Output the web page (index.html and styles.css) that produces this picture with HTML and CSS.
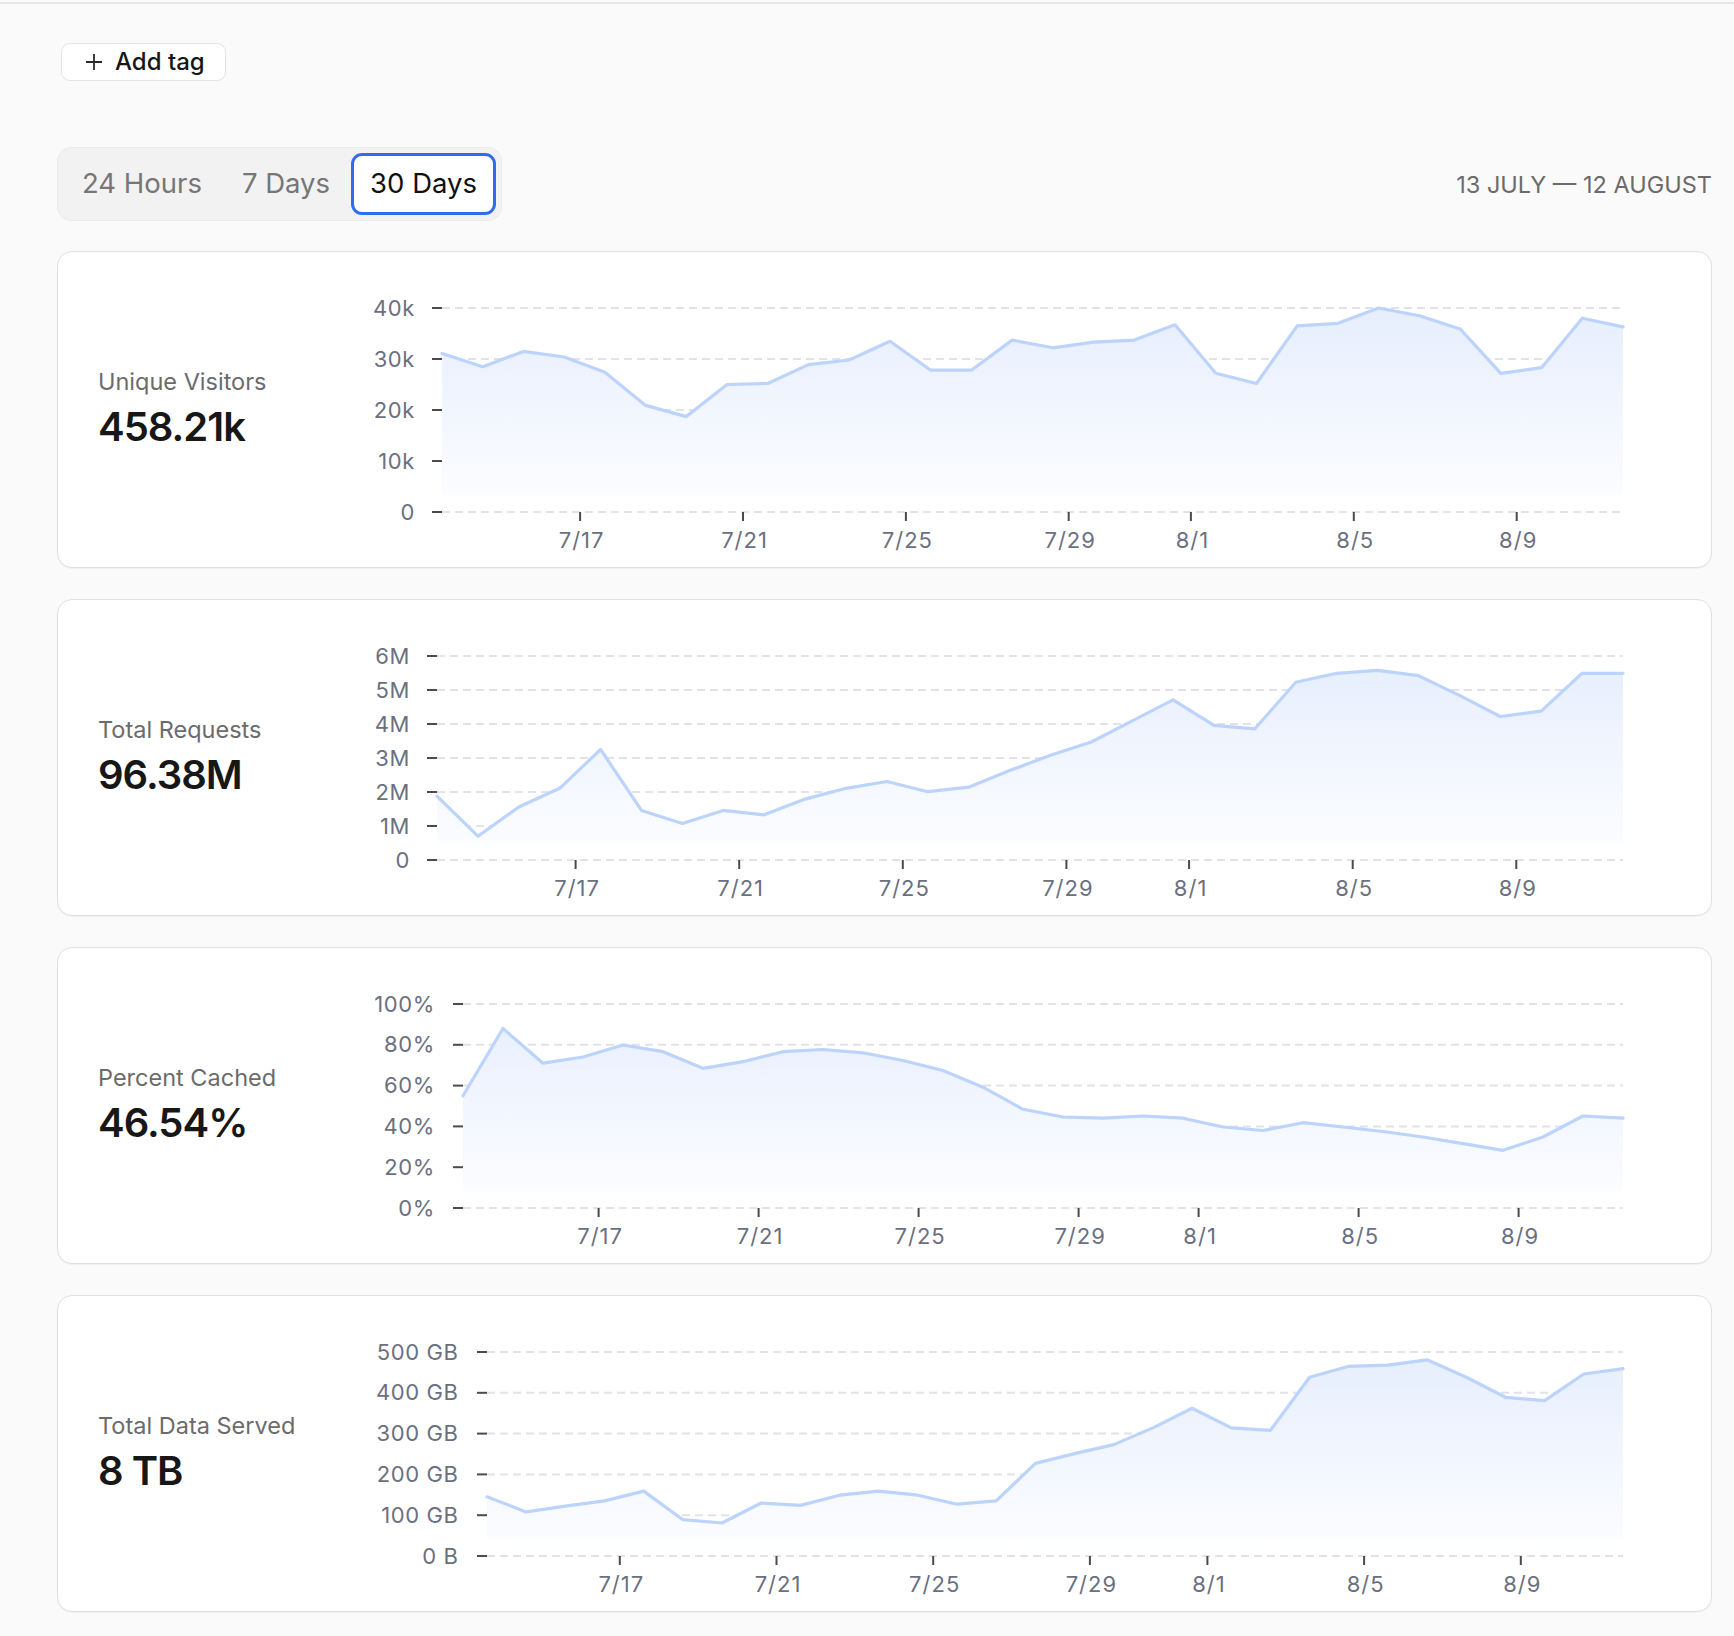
FILE: index.html
```html
<!DOCTYPE html>
<html lang="en">
<head>
<meta charset="utf-8">
<title>Analytics</title>
<link rel="stylesheet" href="styles.css">
</head>
<body>
<div class="topline"></div>
<main class="page">
  <div class="tags">
    <button class="add-tag">
      <svg class="plus" viewBox="0 0 18 18" width="18" height="18"><path d="M9 1v16M1 9h16"/></svg>
      <span>Add tag</span>
    </button>
  </div>

  <div class="toolbar">
    <div class="segmented">
      <button class="seg">24 Hours</button>
      <button class="seg">7 Days</button>
      <button class="seg active">30 Days</button>
    </div>
    <div class="range">13 JULY — 12 AUGUST</div>
  </div>

  <section class="card">
    <div class="stat">
      <div class="stat-label">Unique Visitors</div>
      <div class="stat-value">458.21k</div>
    </div>
    <svg class="chart" width="1300" height="314" viewBox="0 0 1300 314">
      <defs><linearGradient id="g1" gradientUnits="userSpaceOnUse" x1="0" y1="56" x2="0" y2="260"><stop offset="0" stop-color="#e6eefd"/><stop offset="0.9" stop-color="#fbfcff"/><stop offset="0.95" stop-color="#ffffff" stop-opacity="0"/></linearGradient></defs>
      <g class="grid">
        <line x1="87" y1="56" x2="1268" y2="56"/><line x1="87" y1="107" x2="1268" y2="107"/><line x1="87" y1="158" x2="1268" y2="158"/><line x1="87" y1="209" x2="1268" y2="209"/><line x1="87" y1="260" x2="1268" y2="260"/>
      </g>
      <polygon class="area" fill="url(#g1)" points="87,260 87,101.4 127.7,114.7 168.4,99.4 209.2,105 249.9,120.3 290.6,153.4 331.3,164.6 372.1,132.5 412.8,131.5 453.5,112.6 494.2,108 535,89.2 575.7,118.2 616.4,118.2 657.1,88.1 697.9,95.8 738.6,90.2 779.3,88.1 820,72.8 860.8,121.3 901.5,131.5 942.2,73.9 982.9,71.3 1023.7,56 1064.4,63.7 1105.1,76.9 1145.8,121.3 1186.6,115.7 1227.3,66.2 1268,74.9 1268,260"/>
      <polyline class="line" points="87,101.4 127.7,114.7 168.4,99.4 209.2,105 249.9,120.3 290.6,153.4 331.3,164.6 372.1,132.5 412.8,131.5 453.5,112.6 494.2,108 535,89.2 575.7,118.2 616.4,118.2 657.1,88.1 697.9,95.8 738.6,90.2 779.3,88.1 820,72.8 860.8,121.3 901.5,131.5 942.2,73.9 982.9,71.3 1023.7,56 1064.4,63.7 1105.1,76.9 1145.8,121.3 1186.6,115.7 1227.3,66.2 1268,74.9"/>
      <g class="tick">
        <line x1="77" y1="56" x2="87" y2="56"/><line x1="77" y1="107" x2="87" y2="107"/><line x1="77" y1="158" x2="87" y2="158"/><line x1="77" y1="209" x2="87" y2="209"/><line x1="77" y1="260" x2="87" y2="260"/>
        <line x1="225.1" y1="260" x2="225.1" y2="269"/><line x1="388" y1="260" x2="388" y2="269"/><line x1="550.9" y1="260" x2="550.9" y2="269"/><line x1="713.7" y1="260" x2="713.7" y2="269"/><line x1="835.9" y1="260" x2="835.9" y2="269"/><line x1="998.8" y1="260" x2="998.8" y2="269"/><line x1="1161.7" y1="260" x2="1161.7" y2="269"/>
      </g>
      <g class="ylab">
        <text x="60" y="63.5">40k</text><text x="60" y="114.5">30k</text><text x="60" y="165.5">20k</text><text x="60" y="216.5">10k</text><text x="60" y="267.5">0</text>
      </g>
      <g class="xlab">
        <text x="226.6" y="296">7/17</text><text x="389.5" y="296">7/21</text><text x="552.4" y="296">7/25</text><text x="715.2" y="296">7/29</text><text x="837.4" y="296">8/1</text><text x="1000.3" y="296">8/5</text><text x="1163.2" y="296">8/9</text>
      </g>
    </svg>
  </section>

  <section class="card">
    <div class="stat">
      <div class="stat-label">Total Requests</div>
      <div class="stat-value">96.38M</div>
    </div>
    <svg class="chart" width="1300" height="314" viewBox="0 0 1300 314">
      <defs><linearGradient id="g2" gradientUnits="userSpaceOnUse" x1="0" y1="56" x2="0" y2="260"><stop offset="0" stop-color="#e6eefd"/><stop offset="0.9" stop-color="#fbfcff"/><stop offset="0.95" stop-color="#ffffff" stop-opacity="0"/></linearGradient></defs>
      <g class="grid">
        <line x1="82" y1="56" x2="1268" y2="56"/><line x1="82" y1="90" x2="1268" y2="90"/><line x1="82" y1="124" x2="1268" y2="124"/><line x1="82" y1="158" x2="1268" y2="158"/><line x1="82" y1="192" x2="1268" y2="192"/><line x1="82" y1="226" x2="1268" y2="226"/><line x1="82" y1="260" x2="1268" y2="260"/>
      </g>
      <polygon class="area" fill="url(#g2)" points="82,260 82,196.1 122.9,236.2 163.8,207 204.7,188.3 245.6,149.5 286.5,210.4 327.4,223.6 368.3,210.4 409.2,214.8 450.1,199.1 491,188.3 531.9,181.5 572.8,191.7 613.7,187.2 654.6,170.6 695.5,155.3 736.3,142 777.2,120.9 818.1,99.9 859,125.4 899.9,128.8 940.8,82.2 981.7,73.3 1022.6,70.3 1063.5,75.7 1104.4,95.4 1145.3,116.5 1186.2,111.1 1227.1,73.3 1268,73.3 1268,260"/>
      <polyline class="line" points="82,196.1 122.9,236.2 163.8,207 204.7,188.3 245.6,149.5 286.5,210.4 327.4,223.6 368.3,210.4 409.2,214.8 450.1,199.1 491,188.3 531.9,181.5 572.8,191.7 613.7,187.2 654.6,170.6 695.5,155.3 736.3,142 777.2,120.9 818.1,99.9 859,125.4 899.9,128.8 940.8,82.2 981.7,73.3 1022.6,70.3 1063.5,75.7 1104.4,95.4 1145.3,116.5 1186.2,111.1 1227.1,73.3 1268,73.3"/>
      <g class="tick">
        <line x1="72" y1="56" x2="82" y2="56"/><line x1="72" y1="90" x2="82" y2="90"/><line x1="72" y1="124" x2="82" y2="124"/><line x1="72" y1="158" x2="82" y2="158"/><line x1="72" y1="192" x2="82" y2="192"/><line x1="72" y1="226" x2="82" y2="226"/><line x1="72" y1="260" x2="82" y2="260"/>
        <line x1="220.6" y1="260" x2="220.6" y2="269"/><line x1="384.2" y1="260" x2="384.2" y2="269"/><line x1="547.8" y1="260" x2="547.8" y2="269"/><line x1="711.4" y1="260" x2="711.4" y2="269"/><line x1="834.1" y1="260" x2="834.1" y2="269"/><line x1="997.7" y1="260" x2="997.7" y2="269"/><line x1="1161.3" y1="260" x2="1161.3" y2="269"/>
      </g>
      <g class="ylab">
        <text x="55" y="63.5">6M</text><text x="55" y="97.5">5M</text><text x="55" y="131.5">4M</text><text x="55" y="165.5">3M</text><text x="55" y="199.5">2M</text><text x="55" y="233.5">1M</text><text x="55" y="267.5">0</text>
      </g>
      <g class="xlab">
        <text x="222.1" y="296">7/17</text><text x="385.7" y="296">7/21</text><text x="549.3" y="296">7/25</text><text x="712.9" y="296">7/29</text><text x="835.6" y="296">8/1</text><text x="999.2" y="296">8/5</text><text x="1162.8" y="296">8/9</text>
      </g>
    </svg>
  </section>

  <section class="card">
    <div class="stat">
      <div class="stat-label">Percent Cached</div>
      <div class="stat-value">46.54%</div>
    </div>
    <svg class="chart" width="1300" height="314" viewBox="0 0 1300 314">
      <defs><linearGradient id="g3" gradientUnits="userSpaceOnUse" x1="0" y1="56" x2="0" y2="260"><stop offset="0" stop-color="#e6eefd"/><stop offset="0.9" stop-color="#fbfcff"/><stop offset="0.95" stop-color="#ffffff" stop-opacity="0"/></linearGradient></defs>
      <g class="grid">
        <line x1="108" y1="56" x2="1268" y2="56"/><line x1="108" y1="96.8" x2="1268" y2="96.8"/><line x1="108" y1="137.6" x2="1268" y2="137.6"/><line x1="108" y1="178.4" x2="1268" y2="178.4"/><line x1="108" y1="219.2" x2="1268" y2="219.2"/><line x1="108" y1="260" x2="1268" y2="260"/>
      </g>
      <polygon class="area" fill="url(#g3)" points="108,260 108,147.8 148,80.5 188,115.2 228,109 268,97 308,103.7 348,120.3 388,113.7 428,103.7 468,101.5 508,104.8 548,112.5 588,122.5 628,139.2 668,161.3 708,169 748,170.2 788,168 828,170.2 868,179 908,182.5 948,174.7 988,179 1028,183.5 1068,189 1108,195.7 1148,202.3 1188,189 1228,168 1268,170.2 1268,260"/>
      <polyline class="line" points="108,147.8 148,80.5 188,115.2 228,109 268,97 308,103.7 348,120.3 388,113.7 428,103.7 468,101.5 508,104.8 548,112.5 588,122.5 628,139.2 668,161.3 708,169 748,170.2 788,168 828,170.2 868,179 908,182.5 948,174.7 988,179 1028,183.5 1068,189 1108,195.7 1148,202.3 1188,189 1228,168 1268,170.2"/>
      <g class="tick">
        <line x1="98" y1="56" x2="108" y2="56"/><line x1="98" y1="96.8" x2="108" y2="96.8"/><line x1="98" y1="137.6" x2="108" y2="137.6"/><line x1="98" y1="178.4" x2="108" y2="178.4"/><line x1="98" y1="219.2" x2="108" y2="219.2"/><line x1="98" y1="260" x2="108" y2="260"/>
        <line x1="243.6" y1="260" x2="243.6" y2="269"/><line x1="403.6" y1="260" x2="403.6" y2="269"/><line x1="563.6" y1="260" x2="563.6" y2="269"/><line x1="723.6" y1="260" x2="723.6" y2="269"/><line x1="843.6" y1="260" x2="843.6" y2="269"/><line x1="1003.6" y1="260" x2="1003.6" y2="269"/><line x1="1163.6" y1="260" x2="1163.6" y2="269"/>
      </g>
      <g class="ylab">
        <text x="80" y="63.5">100%</text><text x="80" y="104.3">80%</text><text x="80" y="145.1">60%</text><text x="80" y="185.9">40%</text><text x="80" y="226.7">20%</text><text x="80" y="267.5">0%</text>
      </g>
      <g class="xlab">
        <text x="245.1" y="296">7/17</text><text x="405.1" y="296">7/21</text><text x="565.1" y="296">7/25</text><text x="725.1" y="296">7/29</text><text x="845.1" y="296">8/1</text><text x="1005.1" y="296">8/5</text><text x="1165.1" y="296">8/9</text>
      </g>
    </svg>
  </section>

  <section class="card">
    <div class="stat">
      <div class="stat-label">Total Data Served</div>
      <div class="stat-value">8 TB</div>
    </div>
    <svg class="chart" width="1300" height="314" viewBox="0 0 1300 314">
      <defs><linearGradient id="g4" gradientUnits="userSpaceOnUse" x1="0" y1="56" x2="0" y2="260"><stop offset="0" stop-color="#e6eefd"/><stop offset="0.9" stop-color="#fbfcff"/><stop offset="0.95" stop-color="#ffffff" stop-opacity="0"/></linearGradient></defs>
      <g class="grid">
        <line x1="132" y1="56" x2="1268" y2="56"/><line x1="132" y1="96.8" x2="1268" y2="96.8"/><line x1="132" y1="137.6" x2="1268" y2="137.6"/><line x1="132" y1="178.4" x2="1268" y2="178.4"/><line x1="132" y1="219.2" x2="1268" y2="219.2"/><line x1="132" y1="260" x2="1268" y2="260"/>
      </g>
      <polygon class="area" fill="url(#g4)" points="132,260 132,200.8 171.2,215.9 210.3,210.2 249.5,204.9 288.7,195.1 327.9,223.7 367,227 406.2,207 445.4,209.4 484.6,199.2 523.7,195.1 562.9,199.2 602.1,208.2 641.2,204.9 680.4,167.4 719.6,157.6 758.8,148.6 797.9,131.9 837.1,112.3 876.3,131.9 915.5,134.3 954.6,81.3 993.8,70.3 1033,69.1 1072.1,63.8 1111.3,81.3 1150.5,101.3 1189.7,104.6 1228.8,78 1268,72.7 1268,260"/>
      <polyline class="line" points="132,200.8 171.2,215.9 210.3,210.2 249.5,204.9 288.7,195.1 327.9,223.7 367,227 406.2,207 445.4,209.4 484.6,199.2 523.7,195.1 562.9,199.2 602.1,208.2 641.2,204.9 680.4,167.4 719.6,157.6 758.8,148.6 797.9,131.9 837.1,112.3 876.3,131.9 915.5,134.3 954.6,81.3 993.8,70.3 1033,69.1 1072.1,63.8 1111.3,81.3 1150.5,101.3 1189.7,104.6 1228.8,78 1268,72.7"/>
      <g class="tick">
        <line x1="122" y1="56" x2="132" y2="56"/><line x1="122" y1="96.8" x2="132" y2="96.8"/><line x1="122" y1="137.6" x2="132" y2="137.6"/><line x1="122" y1="178.4" x2="132" y2="178.4"/><line x1="122" y1="219.2" x2="132" y2="219.2"/><line x1="122" y1="260" x2="132" y2="260"/>
        <line x1="264.8" y1="260" x2="264.8" y2="269"/><line x1="421.5" y1="260" x2="421.5" y2="269"/><line x1="578.2" y1="260" x2="578.2" y2="269"/><line x1="734.9" y1="260" x2="734.9" y2="269"/><line x1="852.4" y1="260" x2="852.4" y2="269"/><line x1="1009.1" y1="260" x2="1009.1" y2="269"/><line x1="1165.8" y1="260" x2="1165.8" y2="269"/>
      </g>
      <g class="ylab">
        <text x="103.5" y="63.5">500 GB</text><text x="103.5" y="104.3">400 GB</text><text x="103.5" y="145.1">300 GB</text><text x="103.5" y="185.9">200 GB</text><text x="103.5" y="226.7">100 GB</text><text x="103.5" y="267.5">0 B</text>
      </g>
      <g class="xlab">
        <text x="266.3" y="296">7/17</text><text x="423" y="296">7/21</text><text x="579.7" y="296">7/25</text><text x="736.4" y="296">7/29</text><text x="853.9" y="296">8/1</text><text x="1010.6" y="296">8/5</text><text x="1167.3" y="296">8/9</text>
      </g>
    </svg>
  </section>
</main>
</body>
</html>
```

FILE: styles.css
```css
* { box-sizing: border-box; }

html, body {
  margin: 0;
  padding: 0;
  background: #fafafa;
  font-family: Inter, "Noto Sans", "Liberation Sans", sans-serif;
  color: #171717;
}

.topline {
  margin-top: 2px;
  height: 2px;
  background: #e6e6e6;
}

.page {
  padding: 39px 22px 24px 57px;
}

.tags {
  display: flex;
  padding-left: 4px;
}

.add-tag {
  display: inline-flex;
  align-items: center;
  gap: 12px;
  height: 38px;
  padding: 0 20px 0 23px;
  background: #ffffff;
  border: 1.5px solid #e4e4e4;
  border-radius: 9px;
  font-family: inherit;
  font-size: 24px;
  font-weight: 500;
  color: #171717;
  line-height: 1;
}

.plus {
  stroke: #2a2a2a;
  stroke-width: 1.8;
  fill: none;
}

.toolbar {
  display: flex;
  align-items: center;
  justify-content: space-between;
  margin-top: 66px;
  margin-bottom: 30px;
}

.segmented {
  display: inline-flex;
  gap: 2px;
  padding: 5px;
  background: #f2f2f2;
  border: 1.5px solid #ebebeb;
  border-radius: 14px;
}

.seg {
  height: 62px;
  padding: 0 16px;
  border: 3px solid transparent;
  border-radius: 11px;
  background: transparent;
  font-family: inherit;
  font-size: 27.5px;
  font-weight: 400;
  color: #767676;
  line-height: 1;
}

.seg.active {
  background: #ffffff;
  border-color: #2f6cf0;
  color: #111111;
}

.range {
  font-size: 23.5px;
  color: #6b6b6b;
}

.card {
  display: flex;
  height: 317px;
  margin-bottom: 31px;
  background: #ffffff;
  border: 1.5px solid #e0e0e0;
  border-radius: 15px;
  box-shadow: 0 1px 1px rgba(0, 0, 0, 0.04);
}

.stat {
  flex: 0 0 297px;
  display: flex;
  flex-direction: column;
  justify-content: center;
  padding-left: 40px;
}

.stat-label {
  font-size: 23.5px;
  line-height: 28px;
  color: #6b6b6b;
  font-weight: 400;
}

.stat-value {
  margin-top: 7px;
  font-size: 40px;
  line-height: 48px;
  font-weight: 600;
  color: #171717;
  letter-spacing: -1px;
}

.chart {
  flex: none;
  display: block;
}

.grid line {
  stroke: #e2e3e8;
  stroke-width: 2;
  stroke-dasharray: 8 5;
}

.tick line {
  stroke: #4a4a4f;
  stroke-width: 2;
}

.line {
  fill: none;
  stroke: #bcd3fc;
  stroke-width: 3.2;
  stroke-linejoin: round;
  stroke-linecap: round;
}

.ylab text,
.xlab text {
  font-family: Inter, "Noto Sans", sans-serif;
  font-size: 22px;
  fill: #6b7080;
}

.ylab text {
  text-anchor: end;
  letter-spacing: 0.6px;
}

.xlab text {
  text-anchor: middle;
  letter-spacing: 1px;
}
```
